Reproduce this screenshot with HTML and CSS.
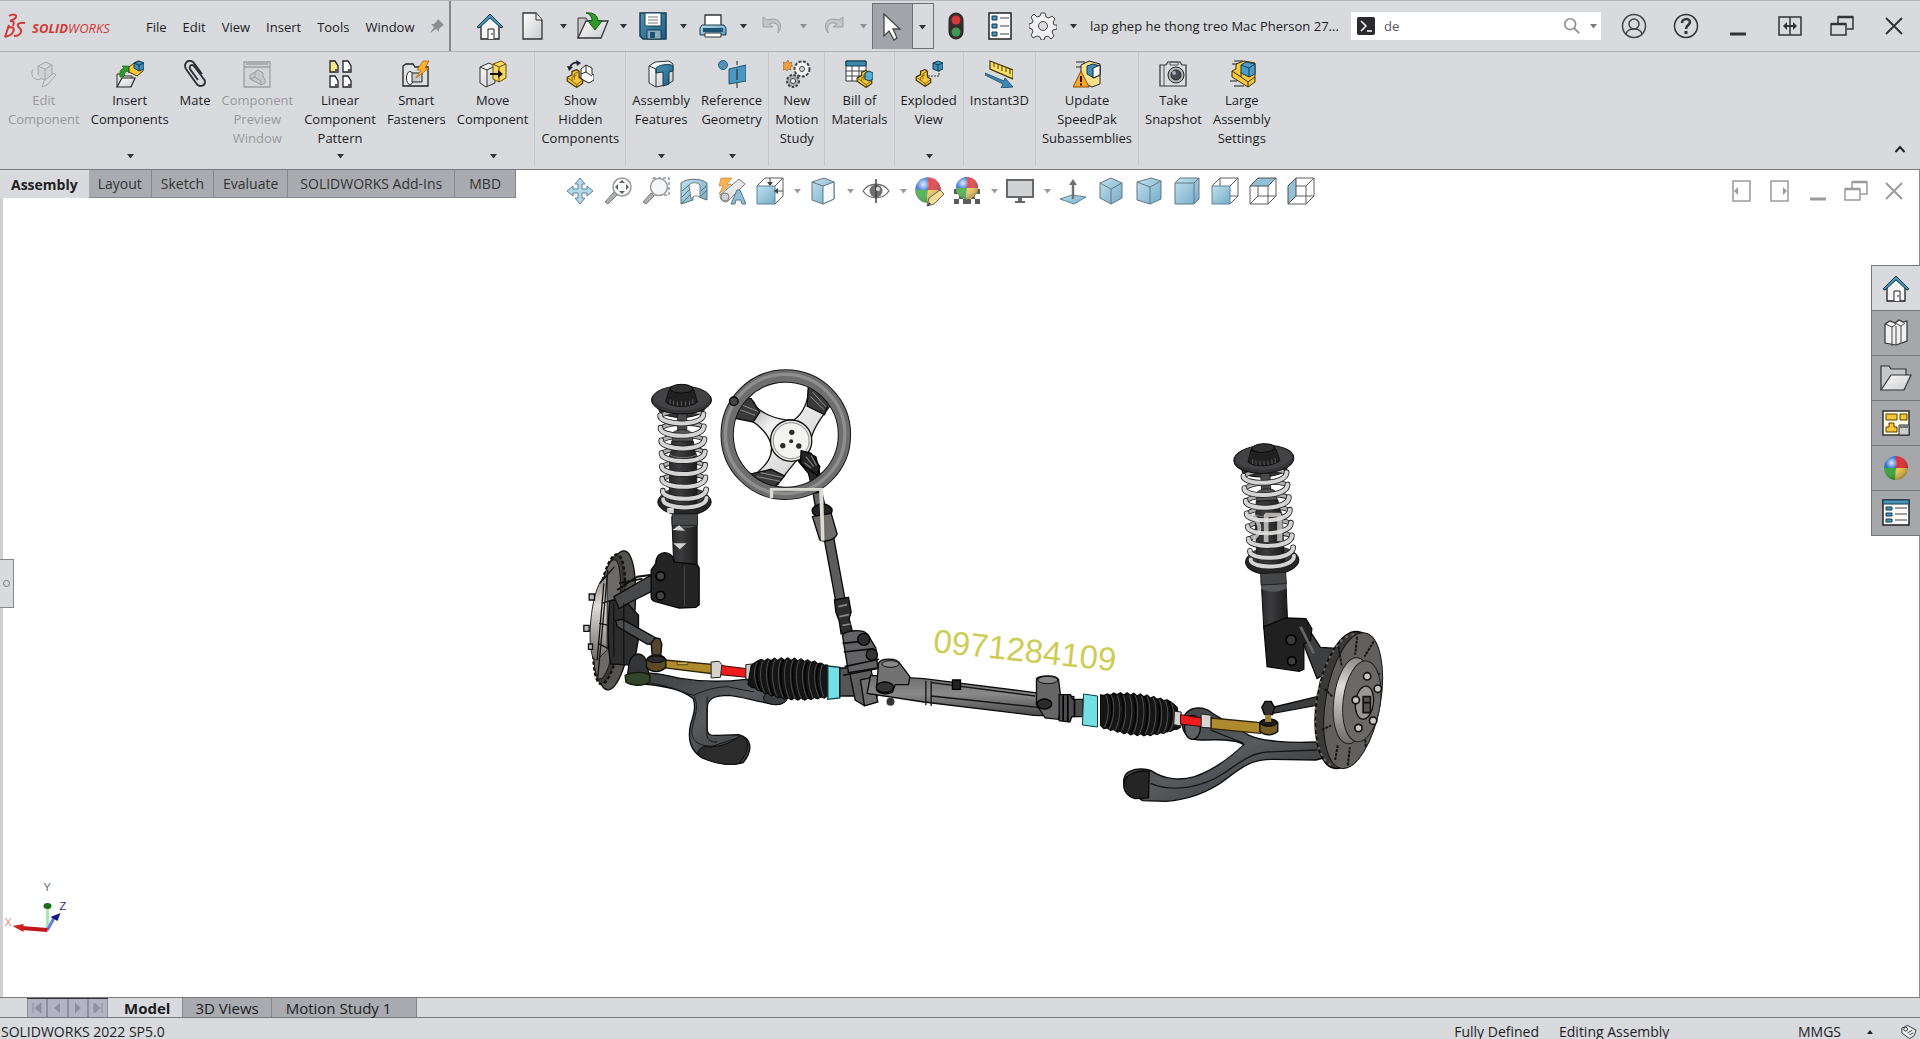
FILE: index.html
```html
<!DOCTYPE html>
<html lang="en">
<head>
<meta charset="utf-8">
<title>SOLIDWORKS - lap ghep he thong treo Mac Pherson</title>
<link rel="stylesheet" href="styles.css">
</head>
<body>
<svg class="defs" width="0" height="0" aria-hidden="true">
  <defs>
    <linearGradient id="blue" x1="0" y1="0" x2="1" y2="1"><stop offset="0" stop-color="#b9dcec"/><stop offset="1" stop-color="#5a9dbd"/></linearGradient>
    <linearGradient id="deep" x1="0" y1="0" x2="1" y2="1"><stop offset="0" stop-color="#4f93b5"/><stop offset="1" stop-color="#1d5c80"/></linearGradient>
    <linearGradient id="grey" x1="0" y1="0" x2="1" y2="1"><stop offset="0" stop-color="#ffffff"/><stop offset="1" stop-color="#c9cacc"/></linearGradient>
    <linearGradient id="tube" x1="0" y1="0" x2="0" y2="1"><stop offset="0" stop-color="#6b6b6b"/><stop offset=".45" stop-color="#8a8a8a"/><stop offset="1" stop-color="#454545"/></linearGradient>
    <linearGradient id="dark" x1="0" y1="0" x2="1" y2="0"><stop offset="0" stop-color="#2a2a2b"/><stop offset=".35" stop-color="#3c3c3e"/><stop offset="1" stop-color="#1c1c1d"/></linearGradient>
    <linearGradient id="spoke" x1="0" y1="0" x2="1" y2="1"><stop offset="0" stop-color="#777"/><stop offset=".35" stop-color="#f2f2f2"/><stop offset=".65" stop-color="#dcdcdc"/><stop offset="1" stop-color="#777"/></linearGradient>
    <linearGradient id="armc" x1="0" y1="0" x2="1" y2="1"><stop offset="0" stop-color="#3a3c3e"/><stop offset=".5" stop-color="#585b5e"/><stop offset="1" stop-color="#2b2c2e"/></linearGradient>
    <linearGradient id="hub" x1="0" y1="0" x2="0" y2="1"><stop offset="0" stop-color="#8b8784"/><stop offset=".35" stop-color="#e2dcd8"/><stop offset="1" stop-color="#6d6a68"/></linearGradient>
    <radialGradient id="shine" cx=".32" cy=".28" r=".75"><stop offset="0" stop-color="#fff" stop-opacity=".85"/><stop offset=".35" stop-color="#fff" stop-opacity="0"/><stop offset="1" stop-color="#000" stop-opacity=".3"/></radialGradient>
    <symbol id="i-home" viewBox="0 0 28 28"><path d="M5 13v14h18V13L14 4z" fill="#f4f4f4" stroke="#222" stroke-width="1.3"/><path d="M1 15 14 2l13 13-2 1L14 6 3 16z" fill="#4a94b5" stroke="#123c52"/><path d="M12 27V17h6v10M16 21v2" fill="#fff" stroke="#222"/></symbol>
    <symbol id="i-part" viewBox="0 0 16 16"><path d="M1 7l4-2V2l4-1.500 2 1.500v5l3 2v3l-5 3.500L1 10z" fill="#f7c83c" stroke="#3d2e00"/><path d="M1 7l4 3 0-3 4-2M5 10l4 3 5-3.500M9 13v2.500M11 2 7 4v5" fill="none" stroke="#6b4f00" stroke-width=".7"/></symbol>
    <symbol id="i-cube" viewBox="0 0 28 28"><path d="M14 1 25 6v15L14 27 3 21V6z" fill="url(#blue)" stroke="#47606d"/><path d="M3 6l11 6 11-6M14 12v15" fill="none" stroke="#47606d"/></symbol>
    <symbol id="i-ball" viewBox="0 0 28 28"><path d="M14 14V2A12 12 0 0 0 2 14z" fill="#2f6fd0"/><path d="M14 14H2a12 12 0 0 0 11 12z" fill="#3aa53a"/><path d="M14 14l-1 12a12 12 0 0 0 13-12z" fill="#f0c54e"/><path d="M14 14h12A12 12 0 0 0 14 2z" fill="#dc2f33"/><circle cx="14" cy="14" r="12" fill="url(#shine)"/></symbol>
    <symbol id="i-restore" viewBox="0 0 28 28"><path d="M10 12V5h15v12h-6M3 12h15v11H3z" fill="none" stroke="currentColor" stroke-width="1.500"/><path d="M3 12h15M10 5h15" stroke="currentColor" stroke-width="2.500"/></symbol>
    <symbol id="i-close" viewBox="0 0 28 28"><path d="M6 6l16 16M22 6 6 22" stroke="currentColor" stroke-width="2"/></symbol>
    <symbol id="i-min" viewBox="0 0 28 28"><path d="M6 22h16" stroke="currentColor" stroke-width="3"/></symbol>
    <symbol id="i-down" viewBox="0 0 10 10"><path d="M2 3h7L5.500 7.500z" fill="currentColor"/></symbol>
  </defs>
</svg>

<header class="titlebar">
  <div class="brand-area">
    <div class="brand">
      <svg class="brand-mark" viewBox="0 0 22 26" aria-hidden="true"><path d="M5 3c3-2 8-2 7 1-1 2-3 3-6 4 5 0 4 2 3 5M5 12 1 24M3 15c6-2 8 0 6 4-1 3-4 4-8 5M21 10c-5-1-8 1-7 3s4 3 3 6c-1 3-4 4-7 4" fill="none" stroke="#d23a35" stroke-width="2"/></svg>
      <span class="brand-name"><b>SOLID</b>WORKS</span>
    </div>
    <nav class="menu" aria-label="Main menu">
      <button>File</button><button>Edit</button><button>View</button><button>Insert</button><button>Tools</button><button>Window</button>
    </nav>
    <button class="pin" aria-label="Pin menu"><svg viewBox="0 0 16 16"><path d="M9 1l6 6-2 1-3 3 0 3-3-3-6 4 4-6-3-3 3 0 3-3z" fill="#8b8d91"/></svg></button>
  </div>
  <div class="quick">
    <button class="q wide" aria-label="Home"><svg class="ic"><use href="#i-home"/></svg></button>
    <button class="q" aria-label="New"><svg class="ic" viewBox="0 0 28 28"><path d="M4 1h13l6 7v19H4z" fill="url(#grey)" stroke="#333" stroke-width="1.300"/><path d="M17 1v7h6" fill="#eee" stroke="#333"/></svg></button><button class="dd" aria-label="New options"><svg><use href="#i-down"/></svg></button>
    <button class="q" aria-label="Open"><svg class="ic big" viewBox="0 0 32 28"><path d="M1 26V6h8l2 3h14v6" fill="#c8c9cb" stroke="#333"/><path d="M1 26 9 9h22l-7 17z" fill="url(#grey)" stroke="#333" stroke-width="1.300"/><path d="M9 1c8-1 12 3 12 8h4l-7 9-7-9h4c0-4-2-7-6-8z" fill="#2f9a2c" stroke="#145c12"/></svg></button><button class="dd" aria-label="Open options"><svg><use href="#i-down"/></svg></button>
    <button class="q" aria-label="Save"><svg class="ic" viewBox="0 0 28 28"><path d="M1 1h26v26H4l-3-3z" fill="url(#deep)" stroke="#143e55" stroke-width="1.500"/><path d="M6 1h16v13H6z" fill="#fff" stroke="#143e55"/><path d="M9 5h10M9 8h10M9 11h10" stroke="#777"/><path d="M8 18h14v9H8z" fill="#8fa9b8" stroke="#143e55"/><path d="M11 20h5v6h-5z" fill="#1d5474"/></svg></button><button class="dd" aria-label="Save options"><svg><use href="#i-down"/></svg></button>
    <button class="q" aria-label="Print"><svg class="ic" viewBox="0 0 28 28"><path d="M6 3h16v12H6z" fill="#fff" stroke="#333" stroke-width="1.300"/><path d="M3 13h22l2 3v7H1v-7z" fill="url(#blue)" stroke="#143e55"/><path d="M4 16h20v4H4z" fill="#1d5474"/><path d="M6 21h16v4H6z" fill="#fff" stroke="#333"/></svg></button><button class="dd" aria-label="Print options"><svg><use href="#i-down"/></svg></button>
    <button class="q off" aria-label="Undo"><svg class="ic" viewBox="0 0 28 28"><path d="M4 5v10h10l-4-3c6-3 11 0 9 9 5-7 3-17-11-13z" fill="#c3c4c7" stroke="#9fa1a5"/></svg></button><button class="dd off" aria-label="Undo list"><svg><use href="#i-down"/></svg></button>
    <button class="q off" aria-label="Redo"><svg class="ic" viewBox="0 0 28 28"><path d="M24 5v10H14l4-3c-6-3-11 0-9 9C4 14 6 4 20 8z" fill="#c3c4c7" stroke="#9fa1a5"/></svg></button><button class="dd off" aria-label="Redo list"><svg><use href="#i-down"/></svg></button>
    <div class="select">
      <button class="q on" aria-label="Select"><svg class="ic" viewBox="0 0 28 28"><path d="M5 1v22l5-5 5 9 3-2-4-9h7z" fill="#fff" stroke="#444" stroke-width="1.300"/></svg></button><button class="dd" aria-label="Select options"><svg><use href="#i-down"/></svg></button>
    </div>
    <button class="q wide" aria-label="Rebuild"><svg class="ic" viewBox="0 0 28 28"><rect x="7" y="1" width="14" height="26" rx="7" fill="#3a2c2c" stroke="#222"/><circle cx="14" cy="8" r="4.500" fill="#d43a37"/><circle cx="14" cy="20" r="4.500" fill="#3e9a55"/></svg></button>
    <button class="q wide" aria-label="File properties"><svg class="ic" viewBox="0 0 28 28"><path d="M3 1h22v26H3z" fill="#fbfbfb" stroke="#222" stroke-width="1.500"/><g fill="#4c93b5" stroke="#123c52"><path d="M6 4h5v4H6zM6 12h5v4H6zM6 20h5v4H6z"/></g><path d="M14 6h9M14 14h9M14 22h9" stroke="#444"/></svg></button>
    <button class="q" aria-label="Options"><svg class="ic" viewBox="0 0 28 28"><path d="M12 1h4l1 4 3 1 3-2 3 3-2 3 1 3 3 0v4l-4 1-1 2 2 4-3 3-3-3-3 1-1 3h-3l-1-3-3-1-4 2-2-3 2-3-1-3-3-1v-4l3-1 1-2-2-4 3-3 3 3 3-1z" fill="#f1f1f1" stroke="#444"/><circle cx="14" cy="14" r="4.500" fill="#d8dade" stroke="#444"/></svg></button><button class="dd" aria-label="Options list"><svg><use href="#i-down"/></svg></button>
  </div>
  <span class="doc-title">lap ghep he thong treo Mac Pherson 27...</span>
  <form class="search" role="search">
    <svg class="prompt" viewBox="0 0 18 18" aria-hidden="true"><rect width="18" height="18" rx="2" fill="#2a2a2c"/><path d="M4 4l5 5-5 5M10 14h5" fill="none" stroke="#fff" stroke-width="1.500"/></svg>
    <input type="text" value="de" aria-label="Search commands">
    <button type="button" aria-label="Search"><svg class="glass" viewBox="0 0 20 20"><circle cx="8" cy="8" r="6" fill="none" stroke="#8d8f92" stroke-width="1.800"/><path d="M12 12l6 6" stroke="#8d8f92" stroke-width="2"/></svg></button>
    <button type="button" class="sdd" aria-label="Search options"><svg><use href="#i-down"/></svg></button>
  </form>
  <div class="win">
    <button aria-label="Account"><svg class="ic" viewBox="0 0 28 28"><g fill="none" stroke="#444" stroke-width="1.500"><circle cx="14" cy="14" r="11.500"/><circle cx="14" cy="12" r="5"/><path d="M6 22c1-4 4-5 8-5s7 1 8 5"/></g></svg></button>
    <button aria-label="Help"><svg class="ic" viewBox="0 0 28 28"><circle cx="14" cy="14" r="11.500" fill="none" stroke="#333" stroke-width="1.500"/><path d="M10 11c0-5 8-5 8-1 0 3-4 3-4 7" fill="none" stroke="#333" stroke-width="2.500"/><path d="M12.500 19h3v3h-3z" fill="#333"/></svg></button>
    <button aria-label="Minimize"><svg class="ic"><use href="#i-min"/></svg></button>
    <button aria-label="Span displays"><svg class="ic" viewBox="0 0 28 28"><path d="M3 5h22v18H3zM14 5v18" fill="none" stroke="#333" stroke-width="1.500"/><path d="M8 14h12" stroke="#333" stroke-width="2"/><path d="M11 10v8l-4-4zM17 10v8l4-4z" fill="#333"/></svg></button>
    <button aria-label="Restore"><svg class="ic"><use href="#i-restore"/></svg></button>
    <button aria-label="Close"><svg class="ic"><use href="#i-close"/></svg></button>
  </div>
</header>

<section class="ribbon" aria-label="Assembly commands">
  <div class="group">
    <button class="cmd" disabled><svg class="ic" viewBox="0 0 28 28"><path d="M8 6l8-4 6 3v11l-7 4-7-3z" fill="#cfd0d3" stroke="#a5a7aa"/><path d="M3 9c-4 8 3 12 8 10M12 27l2-6 10-8 2 2-9 10zM8 6l7 3 7-4M15 9v11" fill="#d9dadd" stroke="#a5a7aa"/></svg><span>Edit<br>Component</span></button>
    <button class="cmd"><svg class="ic" viewBox="0 0 28 28"><path d="M1 27V14h6l2 2h7v3" fill="#ddd" stroke="#333"/><path d="M1 27l5-9h13l-4 9z" fill="url(#grey)" stroke="#222" stroke-width="1.200"/><path d="M4 17C3 11 5 9 8 8L6 6h7v7l-2-2c-2 1-3 3-3 6z" fill="#2f9a2c" stroke="#145c12" stroke-width=".6"/><path d="M13 7l5-4 4-2 5 2v8l-6 5-8-4z" fill="#f7c83c" stroke="#4a3800"/><path d="M18 3l5-2 5 2v6l-5 2-5-3z" fill="#3f8db8" stroke="#123c52"/><path d="M18 3l5 2 5-2M23 5v6" fill="none" stroke="#123c52"/></svg><span>Insert<br>Components</span><svg class="more"><use href="#i-down"/></svg></button>
    <button class="cmd"><svg class="ic" viewBox="0 0 28 28"><path d="M21 14 13 3c-2-3-7-3-8 0-2 2-1 4 0 6l10 14c3 5 9 3 9-1 0-2-1-3-2-4L13 6c-2-2-5-1-4 3l8 11" fill="none" stroke="#303238" stroke-width="1.900"/></svg><span>Mate</span></button>
    <button class="cmd" disabled><svg class="ic" viewBox="0 0 28 28"><path d="M1 2h26v25H1zM1 7h26M3 4h22" fill="#d3d4d8" stroke="#9c9ea3" stroke-width="1.300"/><path d="M7 15l5-3 3-2 5 3v4l2 2v4l-4 2-3-2-8-4zM12 12v5l6 4v4M12 17l-5 2" fill="#c6c7cb" stroke="#9c9ea3"/></svg><span>Component<br>Preview<br>Window</span></button>
    <button class="cmd"><svg class="ic" viewBox="0 0 28 28"><g fill="#fff" stroke="#222" stroke-width="1.300"><path d="M4 1v11h8V6L9 1z" fill="#f8e58a"/><path d="M17 1v11h8V6l-3-5zM4 16v11h8v-6l-3-5zM17 16v11h8v-6l-3-5z"/></g><path d="M9 9h3v3H9zM22 9h3v3h-3zM9 24h3v3H9zM22 24h3v3h-3z" fill="#555"/></svg><span>Linear<br>Component<br>Pattern</span><svg class="more"><use href="#i-down"/></svg></button>
    <button class="cmd"><svg class="ic" viewBox="0 0 28 28"><path d="M1 26V6l3-2h7l2 3h13v19z" fill="#dfe0e2" stroke="#222" stroke-width="1.300"/><ellipse cx="8" cy="18" rx="3.500" ry="6.500" fill="#fff" stroke="#222"/><path d="M10 13h10v9H10z" fill="#c8cacd" stroke="#222"/><path d="M21 1h6l-4 7h4L14 18l5-8h-4z" fill="#f9b233" stroke="#a65a00" stroke-width=".7"/></svg><span>Smart<br>Fasteners</span></button>
    <button class="cmd"><svg class="ic" viewBox="0 0 28 28"><path d="M1 7l9-4 6 3v17l-9 4-6-4z" fill="url(#grey)" stroke="#333"/><path d="M1 7l7 3 8-4M8 10v17" fill="none" stroke="#333"/><path d="M14 4l8-3 5 3v14l-7 4-6-3z" fill="#f8d660" stroke="#6b4f00"/><path d="M14 4l6 3 7-3M20 7v15" fill="none" stroke="#6b4f00"/><path d="M11 14h9" stroke="#111" stroke-width="2"/><path d="M19 10v8l5-4z" fill="#111"/></svg><span>Move<br>Component</span><svg class="more"><use href="#i-down"/></svg></button>
  </div>
  <div class="group">
    <button class="cmd"><svg class="ic" viewBox="0 0 28 28"><path d="M15 9l5-4 6 3v6l2 1v5l-5 3-8-4z" fill="#fff" stroke="#222"/><path d="M20 5v7l6 4M20 12l-5 2" fill="none" stroke="#222"/><use href="#i-part" x="0" y="9" width="19" height="19"/><path d="M4 8C5 3 9 2 12 3" fill="none" stroke="#223" stroke-width="1.800"/><path d="M1 6l6 1-4 4zM10 0l5 3-4 3z" fill="#223"/></svg><span>Show<br>Hidden<br>Components</span></button>
  </div>
  <div class="group">
    <button class="cmd"><svg class="ic" viewBox="0 0 28 28"><path d="M2 6l6-4 14-1 4 3v17l-7 4-10 2-7-4z" fill="url(#grey)" stroke="#333"/><path d="M9 9c0-4 14-6 17-3v5l-4 1v12l-6 2V12l-7 1z" fill="url(#deep)" stroke="#123c52"/><path d="M2 6l7 3v18" fill="none" stroke="#333"/></svg><span>Assembly<br>Features</span><svg class="more"><use href="#i-down"/></svg></button>
    <button class="cmd"><svg class="ic" viewBox="0 0 28 28"><circle cx="5" cy="5" r="4.500" fill="#5590b8" stroke="#2a5f82"/><path d="M11 9l17-4v16l-17 3z" fill="#4c96bf" stroke="#1d5474"/><path d="M19 1v4M19 9v11M19 23v5" stroke="#222"/></svg><span>Reference<br>Geometry</span><svg class="more"><use href="#i-down"/></svg></button>
  </div>
  <div class="group">
    <button class="cmd"><svg class="ic" viewBox="0 0 28 28"><path d="M5 0l1 3 3-1-1 3 2 1-3 1 1 3-3-1-1 2-1-2-3 1 1-3-2-1 2-1-1-3 3 1z" fill="#f0a040" stroke="#a05a10" stroke-width=".6"/><circle cx="19" cy="9" r="7.500" fill="#f3f3f3" stroke="#444" stroke-width="2" stroke-dasharray="3 1.500"/><circle cx="19" cy="9" r="2.500" fill="#d8dade" stroke="#444"/><circle cx="10" cy="21" r="6" fill="#a8aaae" stroke="#444" stroke-width="2" stroke-dasharray="2.500 1.500"/><circle cx="10" cy="21" r="2.500" fill="#eee" stroke="#444"/></svg><span>New<br>Motion<br>Study</span></button>
  </div>
  <div class="group">
    <button class="cmd"><svg class="ic" viewBox="0 0 28 28"><path d="M1 1h20v20H1z" fill="#fff" stroke="#333"/><path d="M1 1h20v5H1z" fill="#3d87ad" stroke="#123c52"/><path d="M1 11h20M1 16h20M7 6v15M14 6v15" stroke="#444"/><use href="#i-part" x="11" y="10" width="18" height="18"/><path d="M20 13l4-2 4 2v6l-4 2-4-2z" fill="#5aaed6" stroke="#123c52"/></svg><span>Bill of<br>Materials</span></button>
  </div>
  <div class="group">
    <button class="cmd"><svg class="ic" viewBox="0 0 28 28"><path d="M13 16h11v-5" fill="none" stroke="#333" stroke-dasharray="2 1"/><use href="#i-part" x="0" y="9" width="18" height="18"/><path d="M18 3l5-2 5 2v6l-5 2-5-2z" fill="#3f8db8" stroke="#123c52"/><path d="M18 3l5 2 5-2M23 5v6" fill="none" stroke="#123c52"/></svg><span>Exploded<br>View</span><svg class="more"><use href="#i-down"/></svg></button>
  </div>
  <div class="group">
    <button class="cmd"><svg class="ic" viewBox="0 0 28 28"><path d="M5 1l23 9v9L5 9z" fill="#f8dd6a" stroke="#4a3800" stroke-width="1.200"/><path d="M9 3v4M13 4v5M17 6v5M21 8v4M25 9v5" stroke="#4a3800"/><path d="M0 13l19 8 1-3 8 9-12 1 2-4L0 15z" fill="#3d87b5" stroke="#174a66" stroke-width=".8"/></svg><span>Instant3D</span></button>
  </div>
  <div class="group">
    <button class="cmd"><svg class="ic" viewBox="0 0 28 28"><path d="M8 5l8-4 11 3v20l-8 3-11-5z" fill="#f7e08a" stroke="#222"/><path d="M14 6l6-2 7 2v9l-6 3-7-4z" fill="#3f8db8" stroke="#123c52"/><path d="M20 8l7-3v10l-7 3z" fill="#fff" stroke="#222"/><path d="M3 2h9M3 7h5" stroke="#222"/><path d="M8 11l8 16H0z" fill="#f9a72b" stroke="#8a4a00"/><path d="M8 16v6M8 23.500v2" stroke="#111" stroke-width="2"/></svg><span>Update<br>SpeedPak<br>Subassemblies</span></button>
  </div>
  <div class="group last">
    <button class="cmd"><svg class="ic" viewBox="0 0 28 28"><path d="M1 5h6l2-3h12l2 3h4v21H1z" fill="#dcdddf" stroke="#333" stroke-width="1.200"/><path d="M5 5v21M11 2h8v3h-8z" fill="none" stroke="#555"/><circle cx="17" cy="15" r="8" fill="#b5b6b9" stroke="#222"/><circle cx="17" cy="15" r="5" fill="#4a4b4f" stroke="#222"/><circle cx="15" cy="13" r="2" fill="#aab"/></svg><span>Take<br>Snapshot</span></button>
    <button class="cmd"><svg class="ic" viewBox="0 0 28 28"><path d="M4 11l4-2V4l8-3 11 2v19l-7 5L4 17z" fill="#f7c83c" stroke="#3d2e00"/><path d="M4 11l9 6 0-5M13 17l7 5 7-5M20 22v5" fill="none" stroke="#3d2e00"/><path d="M13 5l5-3 9 2v10l-6 3-8-4z" fill="#4b9cc6" stroke="#123c52"/><path d="M13 5l8 3 6-4M21 8v9" fill="none" stroke="#123c52"/><path d="M6 1h9M4 4h5M2 21h7M6 26h10" stroke="#222"/></svg><span>Large<br>Assembly<br>Settings</span></button>
  </div>
  <button class="collapse" aria-label="Collapse ribbon"><svg viewBox="0 0 12 12"><path d="M1.500 9 6 4l4.500 5" fill="none" stroke="#222" stroke-width="2"/></svg></button>
</section>

<main class="work">
  <div class="viewbar">
    <nav class="tabs" aria-label="Command tabs">
      <button class="active">Assembly</button><button>Layout</button><button>Sketch</button><button>Evaluate</button><button class="roomy">SOLIDWORKS Add-Ins</button><button class="roomy end">MBD</button>
    </nav>
    <div class="heads" role="toolbar" aria-label="View">
      <button aria-label="Pan"><svg class="ic" viewBox="0 0 28 28"><path d="M14 1l5 6h-3v5h5V9l6 5-6 5v-3h-5v5h3l-5 6-5-6h3v-5H7v3l-6-5 6-5v3h5V7H9z" fill="#a9d3e6" stroke="#3f6f86"/></svg></button>
      <button aria-label="Zoom to fit"><svg class="ic" viewBox="0 0 28 28"><path d="M1 25l9-10 3 3-9 9z" fill="#9da1a5" stroke="#666"/><circle cx="18" cy="10" r="9" fill="#f6f8f9" stroke="#888" stroke-width="1.500"/><path d="M18 3l3 3h-6zM18 17l3-3h-6zM11 10l3-3v6zM25 10l-3-3v6z" fill="#444"/></svg></button>
      <button aria-label="Zoom to area"><svg class="ic" viewBox="0 0 28 28"><path d="M11 1h16v17H11z" fill="none" stroke="#444" stroke-dasharray="3 2"/><path d="M1 25l8-9 3 3-8 8z" fill="#9da1a5" stroke="#666"/><circle cx="17" cy="10" r="8.500" fill="#f3f6f8" stroke="#888" stroke-width="1.500"/></svg></button>
      <button aria-label="Section view"><svg class="ic" viewBox="0 0 28 28"><path d="M1 6c6-5 20-5 26 0v17l-8-3V9h-6v14L1 27z" fill="url(#blue)" stroke="#455"/><path d="M9 8c2-3 9-3 11 0v12c-4-2-7-1-9 2z" fill="#fafafa" stroke="#666"/><path d="M2 14l7-6M2 20l8-8M2 26l8-8M21 14l5-5M21 19l6-6" stroke="#2c5a70"/></svg></button>
      <button aria-label="Dynamic annotation"><svg class="ic" viewBox="0 0 28 28"><path d="M3 1h11l-5 6h4L1 17l4-8H1z" fill="#f6a93a" stroke="#a8691a" stroke-width=".6"/><path d="M2 18L21 2l6 5L9 25c-5 0-7-3-7-7z" fill="#e4e5e7" stroke="#666"/><circle cx="7" cy="20" r="4" fill="#c5c6c9" stroke="#666"/><path d="M13 27l6-14h3l6 14h-4l-1-4h-5l-1 4z" fill="#7fb4cc" stroke="#2f627a"/></svg></button>
      <button aria-label="View orientation"><svg class="ic" viewBox="0 0 28 28"><path d="M1 9 9 1h18v18l-8 8M27 1l-8 8" fill="none" stroke="#444"/><path d="M1 9h18v18H1z" fill="url(#blue)" stroke="#3f6f86"/><path d="M14 1v6M27 14h-6" stroke="#222"/><path d="M11 5h6l-3 4zM22 11v6l-4-3z" fill="#222"/></svg></button><button class="dd" aria-label="Orientation list"><svg><use href="#i-down"/></svg></button>
      <button aria-label="Display style"><svg class="ic" viewBox="0 0 28 28"><path d="M3 5l12-4 10 4v17l-11 5-11-4z" fill="url(#blue)" stroke="#47606d"/><path d="M14 9l11-4v17l-11 5z" fill="#f4f8fa" stroke="#47606d"/><path d="M3 5l11 4" stroke="#47606d"/></svg></button><button class="dd" aria-label="Display list"><svg><use href="#i-down"/></svg></button>
      <button aria-label="Hide or show items"><svg class="ic" viewBox="0 0 28 28"><path d="M1 14C7 5 21 5 27 14 21 23 7 23 1 14z" fill="#fff" stroke="#555" stroke-width="1.300"/><circle cx="14" cy="14" r="6.500" fill="#55585c"/><path d="M14 2v24" stroke="#222" stroke-width="1.500"/><circle cx="16" cy="12" r="2" fill="#ddd"/></svg></button><button class="dd" aria-label="Hide list"><svg><use href="#i-down"/></svg></button>
      <button aria-label="Edit appearance"><svg class="ic xl" viewBox="0 0 32 32"><use href="#i-ball" width="30" height="30"/><path d="M14 31l2-8 11-8 4 4-10 10z" fill="#f2d682" stroke="#444"/><path d="M14 31l2-4 2 2z" fill="#222"/></svg></button>
      <button aria-label="Apply scene"><svg class="ic" viewBox="0 0 28 28"><path d="M1 12h26v15H1z" fill="#fff"/><path d="M1 12h5v5H1zM22 12h5v5h-5zM6 17h4v5H6zM18 17h4v5h-4zM1 22h5v5H1zM10 22h8v5h-8zM22 22h5v5h-5z" fill="#3d3f42"/><use href="#i-ball" x="1" y="-2" width="26" height="26"/></svg></button><button class="dd" aria-label="Scene list"><svg><use href="#i-down"/></svg></button>
      <button aria-label="View settings"><svg class="ic" viewBox="0 0 28 28"><path d="M1 3h26v17H1z" fill="#c9cbcd" stroke="#4c4e52" stroke-width="2"/><path d="M12 20h4v4h-4zM9 24h10v2H9z" fill="#4c4e52"/></svg></button><button class="dd" aria-label="Settings list"><svg><use href="#i-down"/></svg></button>
      <button aria-label="Normal to"><svg class="ic" viewBox="0 0 28 28"><path d="M1 22l12-4 14 2-12 7z" fill="url(#blue)" stroke="#3f6f86"/><path d="M14 22V6" stroke="#55585c" stroke-width="2.500"/><path d="M10 8l4-6 4 6z" fill="#55585c"/></svg></button>
      <button aria-label="Isometric"><svg class="ic"><use href="#i-cube"/></svg></button>
      <button aria-label="Trimetric"><svg class="ic" viewBox="0 0 28 28"><path d="M2 5l14-4 10 3v18l-11 5-13-4z" fill="url(#blue)" stroke="#47606d"/><path d="M2 5l13 5 11-6M15 10v17" fill="none" stroke="#47606d"/></svg></button>
      <button aria-label="Dimetric"><svg class="ic" viewBox="0 0 28 28"><path d="M2 6l5-5h19v21l-5 5H2z" fill="url(#blue)" stroke="#47606d"/><path d="M2 6h19l5-5M21 6v21" fill="none" stroke="#47606d"/></svg></button>
      <button aria-label="Front"><svg class="ic" viewBox="0 0 28 28"><path d="M1 9 9 1h18v18l-8 8M27 1l-8 8M9 1v18M9 19h18" fill="none" stroke="#444"/><path d="M1 9h18v18H1z" fill="url(#blue)" stroke="#3f6f86"/></svg></button>
      <button aria-label="Top"><svg class="ic" viewBox="0 0 28 28"><path d="M1 9v18h18V9M27 1v18l-8 8M9 9v10h18M9 19l-8 8" fill="none" stroke="#444"/><path d="M1 9 9 1h18l-8 8z" fill="#7fb6cf" stroke="#333"/></svg></button>
      <button aria-label="Left"><svg class="ic" viewBox="0 0 28 28"><path d="M1 9h18v18H1M9 1h18v18H9M27 1l-8 8M27 19l-8 8" fill="none" stroke="#444"/><path d="M1 9 9 1v18l-8 8z" fill="#7fb6cf" stroke="#333"/></svg></button>
    </div>
    <div class="docwin">
      <button aria-label="Expand left"><svg class="ic" viewBox="0 0 28 28"><path d="M5 4h17v20H5z" fill="none" stroke="currentColor" stroke-width="1.500"/><path d="M10 10v8l-4-4z" fill="currentColor"/></svg></button>
      <button aria-label="Expand right"><svg class="ic" viewBox="0 0 28 28"><path d="M5 4h17v20H5z" fill="none" stroke="currentColor" stroke-width="1.500"/><path d="M17 10v8l4-4z" fill="currentColor"/></svg></button>
      <button aria-label="Minimize document"><svg class="ic"><use href="#i-min"/></svg></button>
      <button aria-label="Restore document"><svg class="ic"><use href="#i-restore"/></svg></button>
      <button aria-label="Close document"><svg class="ic"><use href="#i-close"/></svg></button>
    </div>
  </div>

  <svg class="stage" viewBox="3 212 1915 785" role="img" aria-label="Front suspension and steering assembly">
    <defs>
      <g id="coil-back"><path d="M-64 2C-60-20 50-24 66-4" fill="none" stroke="#222" stroke-width="14"/><path d="M-64 2C-60-20 50-24 66-4" fill="none" stroke="#b0b0b0" stroke-width="9"/></g>
      <g id="coil-front"><path d="M-64-2C-68 28 66 34 66-6" fill="none" stroke="#222" stroke-width="17" stroke-linecap="round"/><path d="M-64-2C-68 28 66 34 66-6" fill="none" stroke="#d4d4d5" stroke-width="12" stroke-linecap="round"/></g>
      <g id="strut">
        <path d="M-70 18l4 20c30 22 100 22 132 0l6-20z" fill="#353536" stroke="#111" stroke-width="3"/>
        <use href="#coil-back" x="1" y="52"/><use href="#coil-back" x="2" y="89"/><use href="#coil-back" x="3" y="127"/><use href="#coil-back" x="4" y="165"/><use href="#coil-back" x="5" y="204"/><use href="#coil-back" x="6" y="242"/>
        <ellipse cx="9" cy="308" rx="80" ry="40" fill="#262627" stroke="#0c0c0c" stroke-width="3"/>
        <ellipse cx="9" cy="294" rx="72" ry="30" fill="#3e3e40"/>
        <path d="M-12 40h28v60h-28z" fill="#4a4a4c" stroke="#111" stroke-width="2"/>
        <path d="M-26 100c10-12 46-12 56 0l4 26h-62z" fill="#555" stroke="#111" stroke-width="2"/>
        <path d="M-30 126h66l4 28 6 14v150h-82V168l6-14z" fill="url(#dark)" stroke="#0c0c0c" stroke-width="2"/>
        <path d="M-36 166c20 12 62 12 82 0" fill="none" stroke="#777" stroke-width="3"/>
        <use href="#coil-front" x="0" y="50"/><use href="#coil-front" x="1" y="87"/><use href="#coil-front" x="3" y="125"/><use href="#coil-front" x="4" y="163"/><use href="#coil-front" x="5" y="202"/><use href="#coil-front" x="6" y="240"/><use href="#coil-front" x="8" y="276"/><use href="#coil-front" x="9" y="302"/>
        <path d="M-28 344h76v34h-76z" fill="#454648" stroke="#111" stroke-width="2"/>
        <ellipse cx="0" cy="2" rx="90" ry="42" fill="#343436" stroke="#0c0c0c" stroke-width="3"/>
        <ellipse cx="0" cy="-3" rx="84" ry="36" fill="#424244"/>
        <path d="M-48 8l10-34c6-22 70-22 76 0l10 34c-20 18-76 18-96 0z" fill="#202021" stroke="#080808" stroke-width="2"/>
        <ellipse cx="0" cy="-32" rx="34" ry="13" fill="#303031" stroke="#0c0c0c" stroke-width="3"/>
        <path d="M-34 0v14M-24 4v14M-12 6v14M0 6v14M12 6v14M24 4v14M34 0v14" stroke="#5b5b5b" stroke-width="3"/>
      </g>
      <g id="bellows">
        <path d="M0 14l10-8 10-6 10-4 10 4 10-6 10 6 10-8 10 7 10-8 10 7 10-7 10 8 10-7 10 8 10-6 10 8 10-5 10 8 10-4 10 8 10-2 10 6 10 0v92l-10 8-10-4-10 6-10-4-10 6-10-4-10 6-10-6-10 6-10-6-10 5-10-7-10 5-10-7-10 3-10-8-10 2-10-8-10 1-10-9-10 0-10-8-10-2-10-8z" fill="#151515" stroke="#000" stroke-width="3"/>
        <g fill="none" stroke="#4d4d4d" stroke-width="3"><path d="M18 4c-14 26-8 66 6 86M36 0c-14 28-8 76 6 98M54-3c-14 28-8 82 6 106M72-4c-14 28-8 86 6 112M90-4c-14 28-8 88 6 114M108-3c-14 28-8 88 6 116M126-2c-14 28-8 88 6 116M144 0c-14 28-8 86 6 114M162 3c-14 28-8 82 6 110M180 6c-14 28-8 78 6 106M198 9c-14 26-8 74 6 102M214 12c-12 24-8 70 4 96"/></g>
        <g fill="none" stroke="#000" stroke-width="4"><path d="M25 2c-14 26-8 70 6 92M61-3c-14 28-8 84 6 108M97-3c-14 28-8 88 6 114M133-1c-14 28-8 88 6 114M169 4c-14 28-8 82 6 108M204 10c-14 26-8 72 6 98"/></g>
      </g>
    </defs>

    <g transform="translate(560 350) scale(.3333)">
      <!-- left lower arm -->
      <path d="M206 976c60-18 110 2 160 10 60 10 110 12 190 2l100 40c30 10 20 36-10 36-60-10-110-26-140-28-46 0-66 10-66 40v60c0 18 10 22 30 20l64-2c44 10 42 50 14 84-34 12-84 0-120-14-40-20-46-60-38-100 12-36 16-56 8-78-30-28-100-40-152-44z" fill="url(#armc)" stroke="#0b0b0b" stroke-width="4"/>
      <path d="M270 1000c60 6 100 30 130 36 30-14 60-24 100-26l80 16M402 1040c18 40-10 80-8 110 4 30 30 40 64 38l80-26M440 1040v100c-4 26 6 38 30 36" fill="none" stroke="#161718" stroke-width="3"/>
      <path d="M430 1190c40 4 80-8 110-34 24 10 34 40-4 84-40 10-84-4-112-16-16-10-16-24 6-34z" fill="#2b2b2c" stroke="#0b0b0b" stroke-width="3"/>
      <ellipse cx="645" cy="1044" rx="36" ry="20" fill="#3c3e40" stroke="#0b0b0b" stroke-width="3"/>
      <!-- left disc -->
      <ellipse cx="166" cy="811" rx="54" ry="210" transform="rotate(7 166 811)" fill="#55534f" stroke="#0b0b0b" stroke-width="4"/>
      <ellipse cx="146" cy="808" rx="42" ry="196" transform="rotate(7 146 808)" fill="#3a3936" stroke="#0d0d0d" stroke-width="7" stroke-dasharray="10 7"/>
      <ellipse cx="140" cy="808" rx="34" ry="180" transform="rotate(7 140 808)" fill="#6d6b68" stroke="#1a1a1a" stroke-width="3"/>
      <path d="M140 680C90 680 70 940 110 930l30-30z" fill="url(#hub)" stroke="#222" stroke-width="3"/>
      <path d="M130 700l-20 230M142 660l-30 320M118 700l44-50M112 880l40 20M116 820l36 8M124 760l38-12" stroke="#141414" stroke-width="4"/>
      <path d="M86 732h16v18H86zM70 826h16v18H70zM84 882h12v16H84z" fill="#bbb" stroke="#111" stroke-width="4"/>
      <!-- left knuckle -->
      <path d="M148 752h46l40 44v70l-14 80-70-4c-10-60-8-130-2-190z" fill="#2d2d2e" stroke="#090909" stroke-width="4"/>
      <path d="M160 740l110-64 20 40-80 40-34 20z" fill="#47484a" stroke="#0b0b0b" stroke-width="4"/>
      <path d="M170 720l60-40 46-6M176 700l70-14" stroke="#111" stroke-width="6" fill="none"/>
      <path d="M166 812l20-4 100 56 4 20-30-2-90-52z" fill="#4c4d4f" stroke="#0b0b0b" stroke-width="4"/>
      <path d="M190 760v180M160 760v160" stroke="#0b0b0b" stroke-width="3"/>
      <path d="M205 946c6-46 50-46 56 0l4 30h-64z" fill="#333435" stroke="#090909" stroke-width="4"/>
      <path d="M194 976c20-12 60-12 74 0v20c-20 14-56 12-72 0z" fill="#33442a" stroke="#0f1a08" stroke-width="4"/>
      <!-- strut tube and bracket -->
      <path d="M334 500h76v150h-70z" fill="url(#dark)" stroke="#0b0b0b" stroke-width="3"/>
      <path d="M334 506c20 14 56 14 76 0v20c-20 12-56 12-76 0z" fill="#4d4e50"/>
      <use href="#strut" x="363" y="148"/>
      <path d="M336 540l20-14 18 16zM338 580h40l-20 18zM320 474h20v16h-20z" fill="#d5d4cf"/>
      <path d="M286 640c0-44 54-40 54-4l70 8 6 10v110l-10 8-50 2-74-20c-12-4-10-14-10-22V660z" fill="#242425" stroke="#080808" stroke-width="4"/>
      <path d="M372 650v118" stroke="#4a4a4a" stroke-width="3"/>
      <circle cx="300" cy="678" r="13" fill="#444" stroke="#000" stroke-width="5"/><circle cx="300" cy="737" r="13" fill="#444" stroke="#000" stroke-width="5"/>
      <!-- left tie rod -->
      <path d="M312 930l150 14v28l-148-18z" fill="#ae8b2e" stroke="#2c2206" stroke-width="4"/>
      <path d="M350 936h32v8h-32z" fill="#d0b050" stroke="#2c2206" stroke-width="2"/>
      <path d="M478 946l80 10v26l-80-8z" fill="#ee1c1c" stroke="#3d0505" stroke-width="3"/>
      <path d="M452 936l24-2 8 10-4 38-28 2z" fill="#d5d2ce" stroke="#222" stroke-width="3"/>
      <path d="M556 944l22-2v54l-22-10z" fill="#cfc9c4" stroke="#222" stroke-width="3"/>
      <path d="M272 880l12-16 14 2 6 16-4 44h-24z" fill="#55462f" stroke="#0b0b0b" stroke-width="4"/>
      <path d="M258 930c8-20 48-20 58-2v24c-16 18-44 16-58 0z" fill="#5b4a24" stroke="#0b0b0b" stroke-width="4"/>
      <ellipse cx="287" cy="928" rx="26" ry="10" fill="#2b2b2b" stroke="#000" stroke-width="3"/>
      <use href="#bellows" x="572" y="932"/>
      <path d="M802 948l36 4v92l-36 4z" fill="#74e0e4" stroke="#0c3b3e" stroke-width="4"/>
      <path d="M838 954h70v84h-70z" fill="#555" stroke="#0b0b0b" stroke-width="4"/>
      <!-- column -->
      <path d="M722 300l44 20 12 50 4 60-24 0-14-60-30-36z" fill="#262627" stroke="#080808" stroke-width="4"/>
      <path d="M758 430l26-4 14 60-30 4z" fill="#666" stroke="#0b0b0b" stroke-width="4"/>
      <path d="M790 560l28-6 36 196-28 6z" fill="#5c5c5c" stroke="#0b0b0b" stroke-width="4"/>
      <ellipse cx="785" cy="482" rx="30" ry="20" fill="#232324" stroke="#000" stroke-width="4"/>
      <path d="M756 500l56-10 18 62c-6 18-36 26-52 18z" fill="#6e6c69" stroke="#0b0b0b" stroke-width="4"/>
      <path d="M822 750l42-8 8 44-6 20 10 40-34 6-6-40-10-26z" fill="#2d2d2e" stroke="#080808" stroke-width="4"/>
      <path d="M834 770l26-6M836 800l30-6M846 826l24-4" stroke="#888" stroke-width="5"/>
      <!-- steering wheel -->
      <path d="M548 200c30-20 46-40 24-50 20 40 80 62 128 60 28-18 46-60 44-100l70 50c-30 40-52 70-62 104-10 36-60 80-100 140l-80-20c50-40 66-66 60-100-10-40-50-70-84-84z" fill="url(#spoke)" stroke="#161616" stroke-width="4"/>
      <path d="M530 140l42 6 26 40-20 30-60-12zM744 104l64 50-16 40-52-26zM572 372l60-14 40 20-30 34-60-18z" fill="#3a3a3b" stroke="#0c0c0c" stroke-width="4"/>
      <path d="M532 160l60 24M530 176l54 20M756 126l40 44M750 140l40 38M590 380l70 14M600 368l66 14" stroke="#8d8d8d" stroke-width="3"/>
      <circle cx="676" cy="254" r="176" fill="none" stroke="#171717" stroke-width="40"/>
      <circle cx="676" cy="254" r="176" fill="none" stroke="#6e6e6f" stroke-width="34"/>
      <circle cx="674" cy="252" r="179" fill="none" stroke="#8e8e8f" stroke-width="10"/>
      <circle cx="520" cy="154" r="13" fill="#444" stroke="#000" stroke-width="4"/>
      <circle cx="692" cy="272" r="62" fill="#e8e8e6" stroke="#111" stroke-width="4"/><circle cx="692" cy="272" r="54" fill="#f3f3f1" stroke="#555" stroke-width="2"/>
      <g fill="#2a2a2a"><circle cx="694" cy="247" r="8"/><circle cx="692" cy="274" r="6"/><circle cx="667" cy="287" r="8"/><circle cx="715" cy="288" r="8"/></g>
      <path d="M722 302l30 8 26 40-8 26-26-18-24-18z" fill="#232324" stroke="#000" stroke-width="4"/>
      <path d="M736 320l24 30M752 316l16 30M732 338l20 16" stroke="#777" stroke-width="4"/>
      <path d="M628 414v30h10v-22h138l6 150h10l-4-158z" fill="#dcdbd4"/>
      <!-- pinion housing -->
      <path d="M858 920l62-10 30 130-40 26-26-16z" fill="#5e5e5f" stroke="#0b0b0b" stroke-width="4"/>
      <path d="M846 856c10-16 64-20 76-2l24 40 6 60-88 14z" fill="#636365" stroke="#0b0b0b" stroke-width="4"/>
      <path d="M846 880l80-8M850 906l90-10M852 950l104-22M848 976l112-22" stroke="#0d0d0d" stroke-width="5"/>
      <circle cx="910" cy="868" r="18" fill="#2d2d2e" stroke="#000" stroke-width="4"/><circle cx="934" cy="914" r="17" fill="#343435" stroke="#000" stroke-width="4"/>
      <path d="M900 990l36-8 16 74-40 12z" fill="#707071" stroke="#0b0b0b" stroke-width="4"/>
    </g>

    <g transform="translate(860 600) scale(.3333)">
      <path d="M30 226l160 10 350 44 100 10v60l-120-4-330-40-170-26z" fill="url(#tube)" stroke="#0b0b0b" stroke-width="4"/>
      <path d="M214 248l310 40M212 288l320 34M196 242v74M212 244v74" stroke="#161616" stroke-width="4" fill="none"/>
      <path d="M54 190c6-18 56-16 64 0l30 40-4 24-40 0-8 22c-14 10-40 6-48-6z" fill="#727273" stroke="#0b0b0b" stroke-width="4"/>
      <ellipse cx="73" cy="262" rx="26" ry="16" fill="#333" stroke="#000" stroke-width="4"/>
      <ellipse cx="90" cy="192" rx="26" ry="10" fill="#888" stroke="#111" stroke-width="3"/>
      <circle cx="90" cy="305" r="12" fill="#333"/>
      <path d="M276 240h24v28h-24z" fill="#222" stroke="#000" stroke-width="4"/>
      <path d="M528 236c14-12 58-10 66 2l10 80-10 40-40-4-26-40z" fill="#666667" stroke="#0b0b0b" stroke-width="4"/>
      <ellipse cx="562" cy="240" rx="30" ry="11" fill="#858585" stroke="#111" stroke-width="3"/>
      <ellipse cx="552" cy="312" rx="22" ry="15" fill="#2b2b2b" stroke="#000" stroke-width="4"/>
      <path d="M596 284h34l6 14h32v52h-34l-6 16-32-4z" fill="#4e4e50" stroke="#0b0b0b" stroke-width="4"/>
      <path d="M608 286v76M622 286v78M642 298v52" stroke="#000" stroke-width="5"/>
    </g>

    <g transform="translate(1100 420) scale(.3333)">
      <!-- right lower arm -->
      <path d="M246 920c-6-60 60-70 90-40l110 66c40 18 120 24 200 20l40 20v24l-40 10-130-2c-60 0-90 20-140 60-50 40-120 62-180 66l-70-2-44-30c-20-20-14-50 6-58 20-10 50-8 64-2 40 28 90 30 130 18 60-20 110-60 148-96-20-14-70-16-120-14-40 2-58-10-64-40z" fill="url(#armc)" stroke="#0b0b0b" stroke-width="4"/>
      <path d="M150 1090c70 30 160 10 220-30 50-34 80-60 130-64l150-6M330 930l100 40" fill="none" stroke="#161718" stroke-width="4"/>
      <path d="M70 1090c4-30 40-40 76-36l-2 80-40 2c-24-6-36-24-34-46z" fill="#252526" stroke="#080808" stroke-width="4"/>
      <ellipse cx="276" cy="922" rx="24" ry="36" fill="#606164" stroke="#0b0b0b" stroke-width="4"/>
      <use href="#bellows" transform="translate(230 848) scale(-1 1) skewY(-9)"/>
      <!-- right tie rod -->
      <path d="M222 874l20 2v42l-22-4z" fill="#d6d2cd" stroke="#222" stroke-width="3"/>
      <path d="M240 884l64 10v26l-64-8z" fill="#ee1c1c" stroke="#3d0505" stroke-width="3"/>
      <path d="M302 882l30 4v38l-30-2z" fill="#d9d5d1" stroke="#222" stroke-width="3"/>
      <path d="M332 894l148 14v32l-148-14z" fill="#ae8b2e" stroke="#2c2206" stroke-width="4"/>
      <!-- knuckle and steering arm -->
      <path d="M500 866l150-36v26l-144 26z" fill="#3b3c3e" stroke="#0b0b0b" stroke-width="4"/>
      <path d="M478 908c10-14 44-14 54 0v26c-14 14-40 14-54 0z" fill="#775e22" stroke="#0b0b0b" stroke-width="4"/>
      <ellipse cx="504" cy="908" rx="26" ry="11" fill="#1d1d1d" stroke="#000" stroke-width="3"/>
      <path d="M484 862l10-18h18l10 18-6 22h-24z" fill="#303031" stroke="#000" stroke-width="4"/><path d="M494 884h18v22h-18z" fill="#a28232"/>
      <path d="M596 640l24-20 40 62 60 4-20 60-50 30z" fill="#3d3e40" stroke="#0b0b0b" stroke-width="4"/>
      <!-- strut -->
      <path d="M482 480h74l6 140-72 6z" fill="url(#dark)" stroke="#0b0b0b" stroke-width="3"/>
      <path d="M482 484c20 14 54 14 74 0v22c-20 12-54 12-74 0z" fill="#55565a"/>
      <use href="#strut" transform="translate(490 116) rotate(-3)"/>
      <path d="M440 282h22c28 30 28 60-4 82v-10c18-20 18-40-4-60zM490 282h14v84h-14zM494 278h44c10 8 8 20 8 86h-16v-74h-36z" fill="#dddcd8" opacity=".75"/>
      <path d="M490 620l66-26 60 2 18 30-4 36-20 10 0 76-14 6-96-14z" fill="#202021" stroke="#080808" stroke-width="4"/>
      <path d="M600 620l40 80" stroke="#666" stroke-width="8"/>
      <circle cx="572" cy="660" r="15" fill="#3c3c3c" stroke="#000" stroke-width="5"/><circle cx="574" cy="723" r="13" fill="#3c3c3c" stroke="#000" stroke-width="5"/>
      <!-- right disc -->
      <ellipse cx="738" cy="840" rx="88" ry="208" transform="rotate(10 738 840)" fill="#3b3937" stroke="#090909" stroke-width="5"/>
      <ellipse cx="734" cy="840" rx="84" ry="200" transform="rotate(10 734 840)" fill="none" stroke="#6d6a67" stroke-width="6" stroke-dasharray="8 12"/>
      <ellipse cx="758" cy="842" rx="82" ry="206" transform="rotate(10 758 842)" fill="#62605e" stroke="#141414" stroke-width="3"/>
      <path d="M770 650l-6 54M714 680l10 60M820 664l-28 46M672 806l24 24M664 930l28-14M704 1020l8-44M742 1036l6-54M796 980l-4-44M838 760l-18 12" stroke="#151515" stroke-width="6" stroke-dasharray="9 3"/>
      <ellipse cx="756" cy="842" rx="56" ry="130" transform="rotate(7 756 842)" fill="url(#hub)" stroke="#222" stroke-width="3"/>
      <ellipse cx="784" cy="844" rx="56" ry="122" transform="rotate(7 784 844)" fill="#6b6967" stroke="#222" stroke-width="3"/>
      <ellipse cx="792" cy="848" rx="27" ry="50" transform="rotate(7 792 848)" fill="#9a9794" stroke="#111" stroke-width="4"/>
      <path d="M788 830h22v48h-22zM788 848h22" fill="#55534f" stroke="#111" stroke-width="5"/>
      <g fill="#c9c6c2" stroke="#111" stroke-width="5"><circle cx="800" cy="769" r="11"/><circle cx="832" cy="806" r="11"/><circle cx="766" cy="840" r="11"/><circle cx="818" cy="902" r="11"/><circle cx="774" cy="924" r="11"/></g>
    </g>
    <path d="M1083 694l14 2v31l-15-2z" fill="#74e0e4" stroke="#0c3b3e"/>

    <text class="phone" transform="translate(932 652) rotate(6)">0971284109</text>

    <!-- axis triad -->
    <g>
      <path d="M47 906v24" stroke="#a5e8b0" stroke-width="3"/><ellipse cx="47" cy="906" rx="4" ry="3" fill="#1d6b22"/>
      <path d="M47 930l7-13" stroke="#6b7ad8" stroke-width="3"/><path d="M50 917l10-4-3 8z" fill="#14148c"/>
      <path d="M47 930l-26-2" stroke="#c01818" stroke-width="4"/><path d="M12 926l11-2v8z" fill="#d52020"/>
      <text class="axis" x="43" y="891" fill="#667">Y</text><text class="axis" x="59" y="910" fill="#2a2a80">Z</text><text class="axis" x="4" y="926" fill="#e08a8a">X</text>
    </g>
  </svg>

  <button class="tree-handle" aria-label="Show feature tree"></button>

  <aside class="taskpane" aria-label="Task pane">
    <button class="active" aria-label="Resources"><svg class="ic"><use href="#i-home"/></svg></button>
    <button aria-label="Design library"><svg class="ic" viewBox="0 0 28 28"><path d="M3 5l5-3 5 2 4-3 4 2 4-1v20l-11 4L3 24z" fill="#f1f1f1" stroke="#333" stroke-width="1.200"/><path d="M3 5l7 3v19M10 8l4-3M14 26V7M13 4l6 3v17M19 7l4-3" fill="none" stroke="#444"/></svg></button>
    <button aria-label="File explorer"><svg class="ic big" viewBox="0 0 32 28"><path d="M1 26V2h8l2 3h15v6" fill="#c6c7c9" stroke="#333" stroke-width="1.200"/><path d="M1 26l10-15h20l-7 15z" fill="url(#grey)" stroke="#333" stroke-width="1.200"/></svg></button>
    <button aria-label="View palette"><svg class="ic" viewBox="0 0 28 28"><path d="M1 2h26v24H1z" fill="#fffbe4" stroke="#333" stroke-width="1.500"/><path d="M4 5h11v6H4zM18 5h7v6h-7zM4 18h3v-4h5v4h3v5H4z" fill="#f3c63a" stroke="#5a4300"/><path d="M17 16h10v10H17z" fill="#ccc" stroke="#333"/><path d="M17 16h10v3H17z" fill="#777"/></svg></button>
    <button aria-label="Appearances"><svg class="ic"><use href="#i-ball"/></svg></button>
    <button aria-label="Custom properties"><svg class="ic" viewBox="0 0 28 28"><path d="M1 1h26v25H1z" fill="#fafafa" stroke="#222" stroke-width="1.500"/><path d="M1 1h26v4H1z" fill="#4c93b5" stroke="#123c52"/><path d="M4 8h6v3H4zM4 14h6v3H4zM4 20h6v3H4z" fill="#4c93b5" stroke="#123c52"/><path d="M13 9h12M13 15h12M13 21h12" stroke="#444"/></svg></button>
  </aside>
</main>

<div class="sheetbar">
  <div class="scroller">
    <button aria-label="First"><svg viewBox="0 0 12 12"><path d="M2 1v10M10 1v10L4 6z" fill="#8e8ea6" stroke="#8e8ea6"/></svg></button>
    <button aria-label="Previous"><svg viewBox="0 0 12 12"><path d="M9 1v10L3 6z" fill="#8e8ea6"/></svg></button>
    <button aria-label="Next"><svg viewBox="0 0 12 12"><path d="M3 1v10l6-5z" fill="#8e8ea6"/></svg></button>
    <button aria-label="Last"><svg viewBox="0 0 12 12"><path d="M10 1v10M2 1v10l6-5z" fill="#8e8ea6" stroke="#8e8ea6"/></svg></button>
  </div>
  <nav class="sheets" aria-label="Model tabs"><button class="active">Model</button><button>3D Views</button><button class="long">Motion Study 1</button></nav>
</div>

<footer class="status">
  <span>SOLIDWORKS 2022 SP5.0</span>
  <span class="state">Fully Defined</span>
  <span class="mode">Editing Assembly</span>
  <button class="units">MMGS</button>
  <svg class="up" viewBox="0 0 8 8" aria-hidden="true"><path d="M1 6h6L4 2z" fill="#222"/></svg>
  <svg class="tag" viewBox="0 0 18 16" aria-hidden="true"><path d="M2 4l6-3 9 5-2 6-5 3-8-6z" fill="#eee" stroke="#333"/><circle cx="6" cy="5" r="2" fill="none" stroke="#333"/><path d="M8 9l5-3M10 11l4-2" stroke="#333"/></svg>
</footer>
</body>
</html>
```
FILE: styles.css
```css
* { box-sizing: border-box; }
html, body { height: 100%; }
body {
  margin: 0;
  display: flex;
  flex-direction: column;
  overflow: hidden;
  background: #d8dade;
  color: #1c1c1e;
  font: 13px/19px "Open Sans", "Noto Sans", sans-serif;
}
button {
  margin: 0;
  padding: 0;
  border: 0;
  background: none;
  color: inherit;
  font: inherit;
}
svg { display: block; flex: none; }
.defs { position: absolute; }
.ic { width: 28px; height: 28px; }
.ic.big { width: 32px; }
.ic.xl { width: 32px; height: 32px; }

/* title bar */
.titlebar {
  display: flex;
  align-items: center;
  height: 52px;
  flex: none;
  border-top: 1px solid #b3b5ba;
  border-bottom: 1px solid #b0b2b8;
}
.brand-area {
  display: flex;
  align-items: center;
  width: 451px;
  height: 100%;
  border-right: 2px solid #85878c;
  padding-left: 4px;
}
.brand { display: flex; align-items: center; gap: 6px; width: 142px; color: #d23a35; }
.brand-mark { width: 22px; height: 26px; }
.brand-name { font-size: 13px; font-style: italic; padding-top: 4px; }
.menu { display: flex; gap: 16px; padding-top: 2px; }
.pin { width: 16px; height: 16px; margin-left: 14px; }
.quick { display: flex; align-items: center; padding-left: 17px; }
.q { display: grid; place-items: center; width: 42px; height: 45px; }
.q.wide { width: 44px; }
.dd { display: grid; place-items: center; width: 18px; height: 45px; color: #333; }
.dd svg { width: 10px; height: 10px; }
.dd.off { color: #8f9196; }
.select { display: flex; width: 62px; height: 46px; border: 1px solid #6f7176; }
.select .q { width: 40px; background: #a2a4aa; border-right: 1px solid #6f7176; }
.doc-title { padding-left: 8px; white-space: nowrap; }
.search {
  display: flex;
  align-items: center;
  width: 250px;
  height: 28px;
  margin: 0 7px 0 auto;
  padding-left: 6px;
  background: #fff;
}
.prompt { width: 18px; height: 18px; }
.search input {
  flex: 1;
  min-width: 0;
  border: 0;
  padding: 0 9px;
  background: none;
  color: #55575c;
  font: inherit;
}
.glass { width: 18px; height: 18px; }
.sdd { padding: 0 3px 0 7px; color: #77797d; }
.sdd svg { width: 10px; height: 10px; }
.win { display: flex; }
.win button { display: grid; place-items: center; width: 52px; height: 45px; color: #333; }

/* ribbon */
.ribbon {
  display: flex;
  flex: none;
  height: 118px;
  padding-left: 2px;
  border-bottom: 1px solid #77797e;
}
.group { display: flex; gap: 1px; padding: 0 1px; border-right: 1px solid #c5c7cb; margin-bottom: 4px; }
.group.last { border: 0; }
.cmd {
  display: flex;
  flex-direction: column;
  align-items: center;
  padding: 8px 5px 4px;
  height: 113px;
}
.cmd span { padding-top: 3px; }
.cmd:disabled { color: #98999d; }
.more { width: 10px; height: 10px; margin-top: auto; color: #333; }
.collapse { margin: 0 14px 14px auto; align-self: flex-end; }
.collapse svg { width: 12px; height: 12px; }

/* work area */
.work {
  position: relative;
  display: flex;
  flex-direction: column;
  flex: 1;
  min-height: 0;
  background: #fff;
  border-left: 3px solid #cfd0d4;
  border-right: 1px solid #8a8c90;
}
.viewbar { display: flex; flex: none; height: 42px; align-items: flex-start; }
.tabs { display: flex; margin-left: -3px; height: 28px; }
.tabs button {
  padding: 0 9px;
  background: #a9abb0;
  border: 1px solid #85878c;
  border-width: 0 1px 1px 0;
  font-size: 14px;
  color: #333;
  white-space: nowrap;
}
.tabs .active { background: #d8dade; border: 0; font-weight: 700; color: #222; padding: 0 11px; }
.tabs .roomy { padding: 0 12px; }
.tabs .end { padding: 0 14px; }
.heads { display: flex; align-items: center; position: absolute; left: 558px; height: 42px; }
.heads button, .docwin button { display: grid; place-items: center; width: 38px; height: 38px; }
.heads button.dd { width: 15px; color: #9a9ca0; }
.heads .ic { opacity: .85; }
.docwin { display: flex; align-items: center; margin-left: auto; margin-right: 6px; height: 42px; color: #9a9b9e; }
.stage { width: 100%; flex: 1; min-height: 0; }
.phone { font: 33px "Liberation Sans", Arial, sans-serif; fill: #cdcd55; }
.axis { font: 11px "Liberation Sans", Arial, sans-serif; }
.tree-handle {
  position: absolute;
  left: -3px;
  top: 389px;
  width: 14px;
  height: 49px;
  display: grid;
  place-items: center;
  background: #d8dade;
  border: 1px solid #85878c;
  border-left: 0;
}
.tree-handle::before { content: ""; width: 5px; height: 5px; border: 1px solid #77797e; border-radius: 50%; }
.taskpane {
  position: absolute;
  right: -1px;
  top: 95px;
  width: 49px;
  border: 1px solid #77797e;
  border-width: 1px 0 0 1px;
}
.taskpane button {
  display: grid;
  place-items: center;
  width: 48px;
  height: 45px;
  background: #a5a7ab;
  border-bottom: 1px solid #77797e;
}
.taskpane .active { background: #d8dade; }

/* bottom bars */
.sheetbar {
  display: flex;
  flex: none;
  height: 21px;
  padding-left: 27px;
  border-top: 1px solid #77797e;
  border-bottom: 1px solid #77797e;
}
.scroller { display: flex; width: 81px; border-top: 1px solid #333; background: #b3b3c4; }
.scroller button { flex: 1; display: grid; place-items: center; border: 1px solid #8e8ea0; border-width: 0 1px; }
.scroller svg { width: 12px; height: 12px; }
.sheets { display: flex; }
.sheets button {
  padding: 0 12px;
  font-size: 15px;
  line-height: 18px;
  background: #a9abb0;
  border-right: 1px solid #85878c;
  white-space: nowrap;
}
.sheets .active { background: #d8dade; font-weight: 700; padding: 0 12px 0 16px; }
.sheets .long { padding: 0 25px 0 14px; }
.status {
  display: flex;
  align-items: center;
  flex: none;
  height: 21px;
  padding: 6px 3px 0 1px;
  font-size: 14px;
  line-height: 20px;
  white-space: nowrap;
}
.state { margin-left: auto; margin-right: 20px; }
.mode { width: 239px; }
.units { width: 68px; text-align: left; }
.up { width: 8px; height: 8px; margin-right: 26px; }
.tag { width: 17px; height: 16px; }
```
